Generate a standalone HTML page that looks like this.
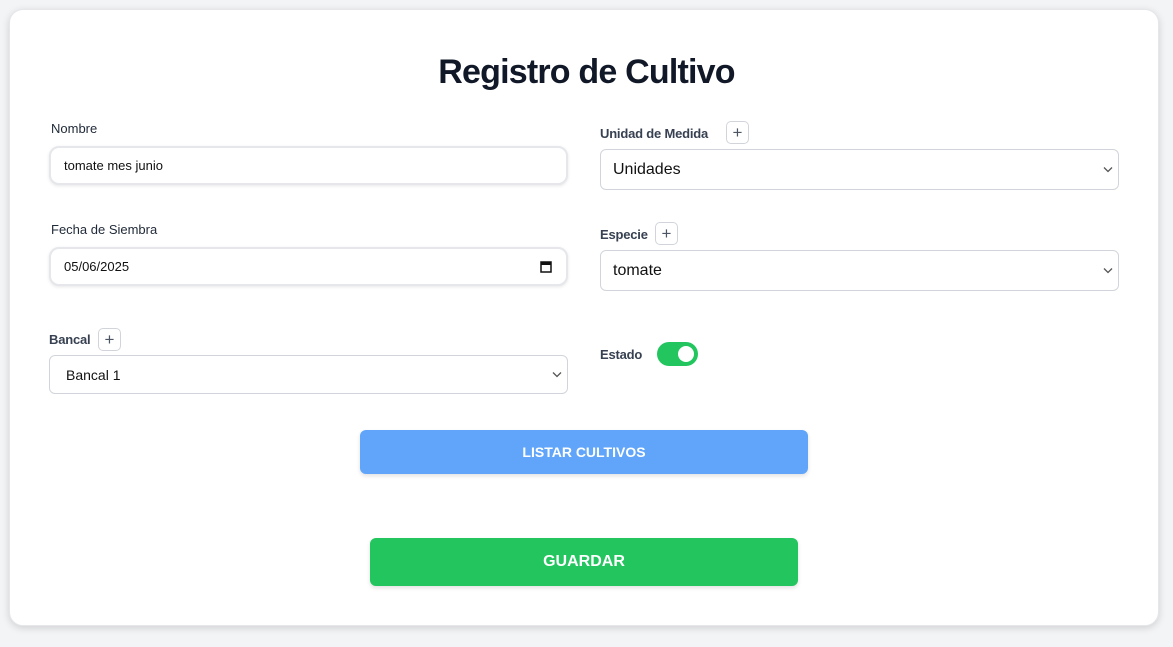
<!DOCTYPE html>
<html><head><meta charset="utf-8"><style>
*{box-sizing:border-box;margin:0;padding:0}
body{width:1173px;height:647px;background:#f3f4f6;font-family:"Liberation Sans",sans-serif;position:relative;overflow:hidden}
.card{position:absolute;left:9px;top:9px;width:1150px;height:617px;background:#fff;border-radius:14px;box-shadow:0 2px 8px rgba(0,0,0,.15);border:1px solid #e5e7eb}
.a{position:absolute}
h1{position:absolute;left:0;width:1173px;top:53px;text-align:center;font-size:34px;font-weight:bold;color:#111827;letter-spacing:-0.8px}
.lab{font-size:13px;color:#1f2937}
.labb{font-size:13px;color:#374151;font-weight:bold;letter-spacing:-0.2px}
.inp{border:2px solid #e5e7eb;border-radius:10px;box-shadow:0 1px 3px rgba(0,0,0,.1);font-size:13px;color:#111;padding-left:13px;display:flex;align-items:center;background:#fff}
.sel{border:1px solid #d1d5db;border-radius:6px;display:flex;align-items:center;background:#fff;color:#111}
.plus{border:1px solid #d1d5db;border-radius:5px;width:23px;height:23px;display:flex;align-items:center;justify-content:center;color:#4b5563;font-size:17px;background:#fff}
.chev{position:absolute;right:5px;top:50%;margin-top:-4px}
.btn{display:flex;align-items:center;justify-content:center;color:#fff;font-weight:bold;border-radius:6px}
</style></head><body>
<div class="card"></div>
<h1>Registro de Cultivo</h1>

<div class="a lab" style="left:51px;top:121px">Nombre</div>
<div class="a inp" style="left:49px;top:146px;width:519px;height:39px">tomate mes junio</div>

<div class="a lab" style="left:51px;top:222px">Fecha de Siembra</div>
<div class="a inp" style="left:49px;top:247px;width:519px;height:39px">05/06/2025
<svg class="a" style="right:14px;top:11px" width="12" height="13" viewBox="0 0 12 13"><rect x="1" y="2" width="10" height="10" fill="none" stroke="#111" stroke-width="1.5"/><rect x="1" y="2" width="10" height="3" fill="#111"/></svg></div>

<div class="a labb" style="left:49px;top:332px">Bancal</div>
<div class="a plus" style="left:98px;top:328px">+</div>
<div class="a sel" style="left:49px;top:355px;width:519px;height:39px;font-size:14px;padding-left:16px">Bancal 1
<svg class="chev" width="10" height="7" viewBox="0 0 10 7"><path d="M1 1.5L5 5.5L9 1.5" fill="none" stroke="#555" stroke-width="1.3"/></svg></div>

<div class="a labb" style="left:600px;top:126px">Unidad de Medida</div>
<div class="a plus" style="left:726px;top:121px">+</div>
<div class="a sel" style="left:600px;top:149px;width:519px;height:41px;font-size:16px;padding-left:12px">Unidades
<svg class="chev" width="10" height="7" viewBox="0 0 10 7"><path d="M1 1.5L5 5.5L9 1.5" fill="none" stroke="#555" stroke-width="1.3"/></svg></div>

<div class="a labb" style="left:600px;top:227px">Especie</div>
<div class="a plus" style="left:655px;top:222px">+</div>
<div class="a sel" style="left:600px;top:250px;width:519px;height:41px;font-size:16px;padding-left:12px">tomate
<svg class="chev" width="10" height="7" viewBox="0 0 10 7"><path d="M1 1.5L5 5.5L9 1.5" fill="none" stroke="#555" stroke-width="1.3"/></svg></div>

<div class="a labb" style="left:600px;top:347px">Estado</div>
<div class="a" style="left:657px;top:342px;width:41px;height:24px;border-radius:12px;background:#22c55e"><div class="a" style="right:4px;top:4px;width:16px;height:16px;border-radius:50%;background:#fff"></div></div>

<div class="a btn" style="left:360px;top:430px;width:448px;height:44px;background:#60a5fa;font-size:14px;box-shadow:0 2px 4px rgba(0,0,0,.12)">LISTAR CULTIVOS</div>
<div class="a btn" style="left:370px;top:538px;width:428px;height:48px;background:#22c55e;font-size:16px;box-shadow:0 2px 4px rgba(0,0,0,.12)">GUARDAR</div>
</body></html>
